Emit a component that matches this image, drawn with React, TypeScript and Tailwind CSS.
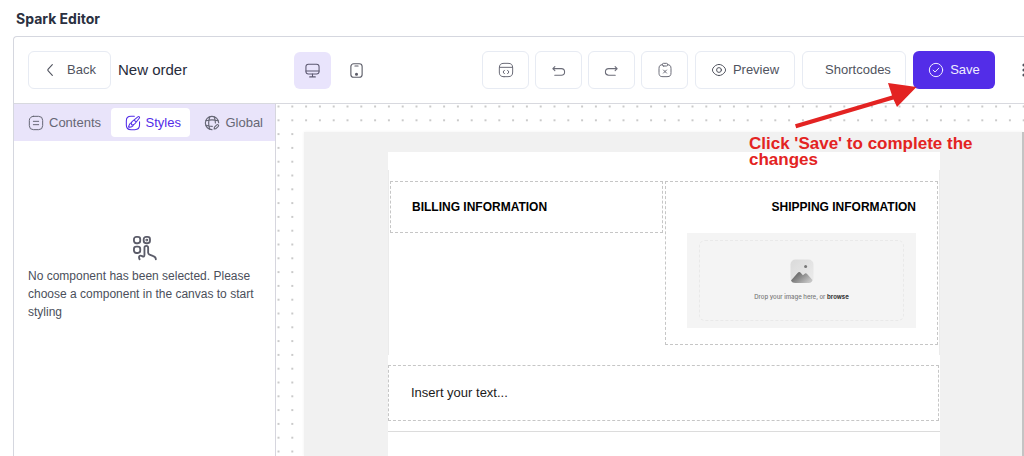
import type { ReactNode } from 'react';

const DOT_PITCH = 13.8;

function Icon({ size = 16, sw = 1.5, children }: { size?: number; sw?: number; children: ReactNode }) {
  return (
    <svg
      width={size}
      height={size}
      viewBox="0 0 24 24"
      fill="none"
      stroke="currentColor"
      strokeWidth={sw}
      strokeLinecap="round"
      strokeLinejoin="round"
      aria-hidden="true"
      className="shrink-0"
    >
      {children}
    </svg>
  );
}

const BackIcon = () => (
  <Icon sw={1.7}>
    <path d="M14 4 7.8 10.6a2 2 0 0 0 0 2.8L14 20" />
  </Icon>
);

const DesktopIcon = () => (
  <Icon size={15} sw={1.7}>
    <rect x="1.5" y="2" width="21" height="15.5" rx="4" />
    <path d="M1.5 12.8h21M12 17.5V22M7.5 22.2h9" />
  </Icon>
);

const MobileIcon = () => (
  <Icon size={15} sw={1.8}>
    <rect x="3" y="1.2" width="18" height="21.6" rx="4.5" />
    <path d="M9.5 4.8h5" />
    <circle cx="12" cy="17.8" r="1.5" fill="currentColor" />
  </Icon>
);

const CodeIcon = () => (
  <Icon sw={1.5}>
    <path d="M9 22h6c5 0 7-2 7-7V9c0-5-2-7-7-7H9C4 2 2 4 2 9v6c0 5 2 7 7 7ZM2.2 8h19.6M9.7 12.4 7.6 15l2.1 2.6M14.3 12.4l2.1 2.6-2.1 2.6" />
  </Icon>
);

const UndoIcon = () => (
  <Icon size={15} sw={1.7}>
    <path d="M6 19.5h10.5a5.2 5.2 0 0 0 0-10.5H3M6.2 5.8 3 9l3.2 3.2" />
  </Icon>
);

const RedoIcon = () => (
  <Icon size={15} sw={1.7}>
    <path d="M18 19.5H7.5a5.2 5.2 0 0 1 0-10.5H21M17.8 5.8 21 9l-3.2 3.2" />
  </Icon>
);

const ClearIcon = () => (
  <Icon sw={1.5}>
    <path d="M10 6h4c2 0 2-1 2-2 0-2-1-2-2-2h-4C9 2 8 2 8 4s1 2 2 2ZM16 4c3.3.2 5 1.4 5 6v6c0 4-1 6-6 6H9c-5 0-6-2-6-6v-6c0-4.600 1.700-5.800 5-6M9.700 12l4.600 4.600M14.300 12l-4.600 4.600" />
  </Icon>
);

const EyeIcon = () => (
  <Icon sw={1.5}>
    <circle cx="12" cy="12" r="3.6" />
    <path d="M12 20.300c3.500 0 6.800-2.100 9.100-5.700.9-1.400.9-3.800 0-5.200-2.300-3.600-5.600-5.700-9.100-5.700S5.200 5.800 2.900 9.400c-.9 1.400-.9 3.800 0 5.200 2.300 3.600 5.600 5.700 9.100 5.700Z" />
  </Icon>
);

const CheckIcon = () => (
  <Icon sw={1.5}>
    <circle cx="12" cy="12" r="10" />
    <path d="m7.700 12.200 2.900 2.900 5.700-5.900" />
  </Icon>
);

const ContentsIcon = () => (
  <Icon>
    <rect x="2" y="2" width="20" height="20" rx="6" />
    <path d="M8 9.500h8M8 14.500h8" />
  </Icon>
);

const StylesIcon = () => (
  <Icon sw={1.6}>
    <path d="M21.800 10v5c0 5-2 7-7 7H9c-5 0-7-2-7-7V9c0-5 2-7 7-7h5" />
    <path d="m21.400 4.900-6.300 7.900c-.7.900-2.100 1.900-3.200 2.100-1.700.3-2.800-.9-2.500-2.600.2-1 1.100-2.400 2-3.100l7.900-6.400c1.700-1.200 3.400.4 2.100 2.100ZM14 7.300c.6 1.600 1.500 2.400 3 2.900" />
    <path d="M10 11.500c-3.500 0-3.400 3.500-4.800 6.500 3.400.7 7.200-.2 7.200-3.800" />
  </Icon>
);

const GlobalIcon = () => (
  <Icon sw={1.7}>
    <path d="M22 11.500A10 10 0 1 0 12 22" />
    <path d="M8.500 3c-2 6-2 12 0 18M15.500 3c1.300 3.800 1.700 6.200 1.600 9M3 8.500c6-1.600 12-1.600 18 0M3 15.500c3 1 6 1.400 9.500 1.500" />
    <path d="m19.200 14.700-3.500 3.500-.5 2.800 2.700-.5 3.600-3.500c1.300-1.400-.9-3.600-2.300-2.300Z" />
  </Icon>
);

const PickIcon = () => (
  <svg width="26" height="26" viewBox="0 0 24 24" fill="none" stroke="currentColor" strokeWidth="1.700" strokeLinecap="round" strokeLinejoin="round" aria-hidden="true">
    <rect x="1.800" y="1.800" width="5.800" height="5.800" rx="2.200" />
    <rect x="10.800" y="1.800" width="5.800" height="5.800" rx="2.200" />
    <circle cx="13.700" cy="4.700" r=".5" />
    <rect x="1.800" y="10.800" width="5.800" height="5.800" rx="2.200" />
    <path d="M7 22.400c-.9-1.700-.6-3.300.8-3.400 1.300-.1 2.200 1.400 3.200.8.500-.3.500-1 .5-1.800v-6.200c0-2.400 3.400-2.400 3.400 0v4.600c0 1.200.5 1.500 1.900 1.900l2.900 1.100c1.700.6 2.300 1.600 2.300 3" />
  </svg>
);

const PicturePlaceholder = () => (
  <svg width="24" height="24" viewBox="0 0 24 24" aria-hidden="true">
    <defs>
      <linearGradient id="sky" x1="0" y1="0" x2="1" y2="1">
        <stop offset="0" stopColor="#dadada" />
        <stop offset="1" stopColor="#ececec" />
      </linearGradient>
      <linearGradient id="hill" x1="0" y1="0" x2="1" y2="0.6">
        <stop offset="0" stopColor="#4c4c4c" />
        <stop offset="1" stopColor="#c4c4c4" />
      </linearGradient>
    </defs>
    <rect x="0.5" y="0.5" width="23" height="23.5" rx="5" fill="url(#sky)" />
    <path d="M1 21.500 7.600 14q1.700-1.800 3.300 0l2 2.300 1.500-1.400q1.400-1.200 2.700.1L22.500 21q-.8 3-4 3H5.500Q2 24 1 21.500Z" fill="url(#hill)" />
    <circle cx="15.600" cy="7.600" r="1.500" fill="#777" />
  </svg>
);

function ToolButton({ label, children }: { label: string; children: ReactNode }) {
  return (
    <button aria-label={label} className="flex h-[38px] w-[47px] shrink-0 items-center justify-center rounded-md border border-[#e7ebf3] text-[#6b6c78]">
      {children}
    </button>
  );
}

function Header() {
  return (
    <header className="flex h-[67px] items-center overflow-hidden border-b border-[#d8d9df] pl-3.5 text-[13px] text-[#50535e]">
      <button className="flex h-[38px] w-[83px] shrink-0 items-center justify-center gap-2 rounded-md border border-[#e7ebf3]">
        <BackIcon />
        Back
      </button>
      <h2 className="ml-[7px] w-[176px] shrink-0 text-[15px] text-[#272c3b]">New order</h2>
      <div className="flex shrink-0 gap-[7px]">
        <button aria-label="Desktop view" aria-pressed="true" className="flex h-[37px] w-[37px] items-center justify-center rounded-md bg-[#e9e4fc] text-[#5c5870]">
          <DesktopIcon />
        </button>
        <button aria-label="Mobile view" aria-pressed="false" className="flex h-[37px] w-[37px] items-center justify-center rounded-md text-[#5c5d68]">
          <MobileIcon />
        </button>
      </div>
      <div className="ml-auto -mr-[22px] flex shrink-0 items-center gap-[7px]">
        <div className="flex gap-1.5">
          <ToolButton label="View code"><CodeIcon /></ToolButton>
          <ToolButton label="Undo"><UndoIcon /></ToolButton>
          <ToolButton label="Redo"><RedoIcon /></ToolButton>
          <ToolButton label="Clear"><ClearIcon /></ToolButton>
        </div>
        <button className="flex h-[38px] w-[100px] items-center justify-center gap-1.5 rounded-md border border-[#e7ebf3]">
          <EyeIcon />
          Preview
        </button>
        <button className="h-[38px] w-[104px] rounded-md border border-[#e7ebf3] pl-2">Shortcodes</button>
        <button className="flex h-[38px] w-[82px] items-center justify-center gap-1.5 rounded-md bg-[#532de8] text-[#f0edff]">
          <CheckIcon />
          Save
        </button>
        <button aria-label="More" className="ml-3 flex h-[38px] w-8 items-center pl-2">
          <svg width="4" height="16" viewBox="0 0 4 16" fill="#50515c" aria-hidden="true">
            <circle cx="2" cy="3" r="1.600" />
            <circle cx="2" cy="8" r="1.600" />
            <circle cx="2" cy="13" r="1.600" />
          </svg>
        </button>
      </div>
    </header>
  );
}

function Sidebar() {
  return (
    <aside className="w-[262px] shrink-0 border-r border-[#d6d6de]">
      <nav className="flex h-[37px] items-center justify-between bg-[#e9e4fa] px-3 text-[13px] text-[#666775]">
        <button className="flex items-center gap-[5px] pl-0.5"><ContentsIcon />Contents</button>
        <button className="flex h-[29px] w-[79px] items-center justify-center gap-[5px] rounded bg-white pl-1 text-[#532de8]">
          <StylesIcon />Styles
        </button>
        <button className="flex items-center gap-[5px] pl-1"><GlobalIcon />Global</button>
      </nav>
      <div className="px-3.5 pt-[94px] text-[12px] leading-[18px] text-[#4b4f5b]">
        <div className="flex justify-center text-[#5b5c69]"><PickIcon /></div>
        <p className="mt-1.5">No component has been selected. Please choose a component in the canvas to start styling</p>
      </div>
    </aside>
  );
}

function DotGrid() {
  return (
    <svg className="absolute inset-0 h-full w-full" aria-hidden="true">
      <defs>
        <pattern id="dots" x="-4.4" y="-4.4" width={DOT_PITCH} height={DOT_PITCH} patternUnits="userSpaceOnUse">
          <circle cx="6.9" cy="6.9" r="1" fill="#b8b8b8" />
        </pattern>
      </defs>
      <rect width="100%" height="100%" fill="url(#dots)" />
    </svg>
  );
}

function Canvas() {
  return (
    <section className="relative min-w-0 flex-1 pl-7 pt-7">
      <DotGrid />
      <div className="relative flex min-h-[324px] border-r-2 border-[#c4c4c4] bg-[#f1f1f1] pl-0.5 pt-5 shadow-[0_0_3px_#f1f1f1]">
        <div className="mx-auto w-[552px] bg-white text-black">
          <div className="mt-[18px] border-x border-[#ebebeb]">
            <div className="grid grid-cols-2 items-start gap-0.5 px-px pb-2.5 pt-[11px]">
              <div className="border border-dashed border-[#c6c6c6] px-[21px] py-[15px]">
                <h3 className="text-[12px] font-bold leading-5">BILLING INFORMATION</h3>
              </div>
              <div className="border border-dashed border-[#c6c6c6] px-[21px] pb-4 pt-[15px]">
                <h3 className="text-right text-[12px] font-bold leading-5">SHIPPING INFORMATION</h3>
                <div className="mt-4 bg-[#f4f4f4] px-3 py-[7px]">
                  <div className="flex h-[81px] flex-col items-center rounded-md border border-dashed border-[#e9e9e9] pt-[18px]">
                    <PicturePlaceholder />
                    <p className="mt-2 font-[Inter,sans-serif] text-[6px] font-medium leading-3 text-[#777]">
                      Drop your image here, or <a href="#browse" className="font-bold text-[#333]">browse</a>
                    </p>
                  </div>
                </div>
              </div>
            </div>
          </div>
          <div className="mr-px mt-2.5 border border-dashed border-[#c6c6c6] px-[22px] py-[17px] text-[13px] leading-5 text-[#1b1b1b]">
            Insert your text...
          </div>
          <hr className="mt-2.5 border-[#dcdcdc]" />
        </div>
      </div>
    </section>
  );
}

export default function App() {
  return (
    <div className="relative flex h-screen flex-col overflow-hidden bg-white font-['Liberation_Sans',Arial,sans-serif]">
      <h1 className="pb-2 pl-4 pt-2 font-[Inter,sans-serif] text-[14px] font-bold leading-[22px] text-[#2a3040]">Spark Editor</h1>
      <main className="-mt-0.5 ml-[13px] flex flex-1 flex-col rounded-tl border-l border-t border-[#d5d7df]">
        <Header />
        <div className="flex flex-1">
          <Sidebar />
          <Canvas />
        </div>
      </main>
      <div className="absolute right-7 top-20 w-[247px] text-[#e32322]">
        <svg width="123" height="50" viewBox="0 0 123 50" fill="currentColor" className="absolute left-[46px] top-0" aria-hidden="true">
          <path d="M1.200 48.200 0 44.200 97 15.400 93 3 121.500 7 102 27 98.500 19.600Z" />
        </svg>
        <p className="pt-14 text-[17px] font-bold leading-4">Click 'Save' to complete the changes</p>
      </div>
    </div>
  );
}
